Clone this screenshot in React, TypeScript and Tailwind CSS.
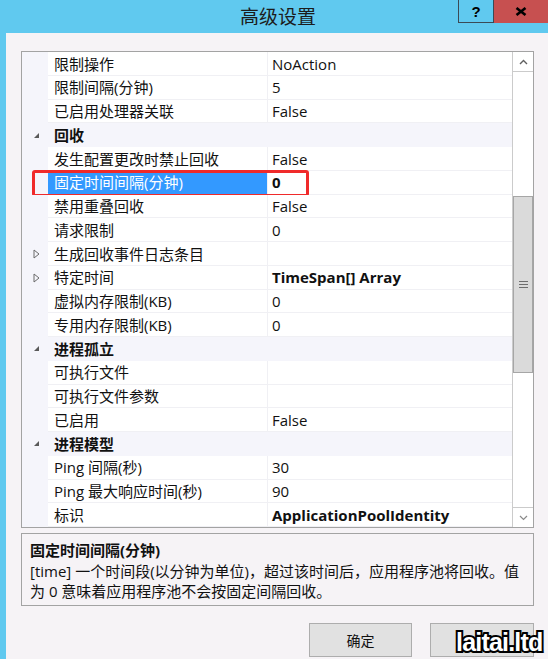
import React from "react";

type Row = {
  kind: "cat" | "item";
  name: string;
  value?: string;
  bold?: boolean;
  exp?: "open" | "closed";
  sel?: boolean;
};

const rows: Row[] = [
  { kind: "item", name: "限制操作", value: "NoAction" },
  { kind: "item", name: "限制间隔(分钟)", value: "5" },
  { kind: "item", name: "已启用处理器关联", value: "False" },
  { kind: "cat", name: "回收", exp: "open" },
  { kind: "item", name: "发生配置更改时禁止回收", value: "False" },
  { kind: "item", name: "固定时间间隔(分钟)", value: "0", bold: true, sel: true },
  { kind: "item", name: "禁用重叠回收", value: "False" },
  { kind: "item", name: "请求限制", value: "0" },
  { kind: "item", name: "生成回收事件日志条目", value: "", exp: "closed" },
  { kind: "item", name: "特定时间", value: "TimeSpan[] Array", bold: true, exp: "closed" },
  { kind: "item", name: "虚拟内存限制(KB)", value: "0" },
  { kind: "item", name: "专用内存限制(KB)", value: "0" },
  { kind: "cat", name: "进程孤立", exp: "open" },
  { kind: "item", name: "可执行文件", value: "" },
  { kind: "item", name: "可执行文件参数", value: "" },
  { kind: "item", name: "已启用", value: "False" },
  { kind: "cat", name: "进程模型", exp: "open" },
  { kind: "item", name: "Ping 间隔(秒)", value: "30" },
  { kind: "item", name: "Ping 最大响应时间(秒)", value: "90" },
  { kind: "item", name: "标识", value: "ApplicationPoolIdentity", bold: true },
];

function Expander({ exp }: { exp?: "open" | "closed" }) {
  if (exp === "open")
    return (
      <svg width="7" height="7" viewBox="0 0 7 7" className="block">
        <polygon points="6,1 6,6 1,6" fill="#5a5a5a" />
      </svg>
    );
  if (exp === "closed")
    return (
      <svg width="7" height="10" viewBox="0 0 7 10" className="block">
        <polygon points="1,1 6,5 1,9" fill="none" stroke="#6a6a6a" strokeWidth="1" />
      </svg>
    );
  return null;
}

function GridRow({ r }: { r: Row }) {
  return (
    <div className="relative flex h-[23.75px] shrink-0">
      <div className="flex w-[26px] shrink-0 items-center bg-[#f5f5fb] pl-[11px]">
        <Expander exp={r.exp} />
      </div>
      {r.kind === "cat" ? (
        <div className="flex flex-1 items-center bg-[#f5f5fb] pl-[6px] pt-[1px] font-bold text-[#111]">
          {r.name}
        </div>
      ) : (
        <>
          <div
            className={
              r.sel
                ? "flex w-[219px] shrink-0 items-center border-b border-[#f0f0f4] bg-[#3399ff] pl-[6px] pt-[1px] whitespace-nowrap text-white"
                : "flex w-[219px] shrink-0 items-center border-b border-[#f0f0f4] bg-white pl-[6px] pt-[1px] whitespace-nowrap text-[#111]"
            }
          >
            {r.name}
          </div>
          <div
            className={
              r.bold
                ? "flex flex-1 items-center border-b border-l border-[#f0f0f4] bg-white pl-[4px] pt-[1px] font-bold whitespace-nowrap text-[#111]"
                : "flex flex-1 items-center border-b border-l border-[#f0f0f4] bg-white pl-[4px] pt-[1px] whitespace-nowrap text-[#111]"
            }
          >
            {r.value}
          </div>
        </>
      )}
      {r.sel && (
        <div className="pointer-events-none absolute left-[10px] top-[-1px] h-[27px] w-[277px] rounded-[3px] border-[3px] border-[#f02a2a]" />
      )}
    </div>
  );
}

export default function App() {
  return (
    <div className="relative flex h-[659px] w-[548px] flex-col overflow-hidden bg-[#60c9ef] font-['Open_Sans','Noto_Sans_CJK_SC',sans-serif] text-[15px]">
      {/* title bar */}
      <div className="relative flex h-[33px] shrink-0 items-center justify-center pl-[8px]">
        <span className="font-['Noto_Sans_CJK_SC',sans-serif] text-[19px] text-[#1c1c1c]">高级设置</span>
        <div className="absolute right-0 top-0 flex h-[23px]">
          <div className="flex w-[36px] items-center justify-center border-b border-l border-r border-[#3b4a55] bg-[#60c9ef]">
            <span className="font-['Liberation_Sans',sans-serif] text-[15px] font-bold leading-none text-black">?</span>
          </div>
          <div className="flex w-[54px] items-center justify-center bg-[#c75050]">
            <svg width="12" height="9" viewBox="0 0 12 9">
              <line x1="1.5" y1="1" x2="10.5" y2="8" stroke="#000" strokeWidth="2.6" />
              <line x1="10.5" y1="1" x2="1.5" y2="8" stroke="#000" strokeWidth="2.6" />
            </svg>
          </div>
        </div>
      </div>

      {/* client area */}
      <div className="ml-[6px] flex flex-1 flex-col bg-[#f6f3f6] pl-[15px] pr-[14px] pt-[18px]">
        {/* property grid */}
        <div className="flex h-[477px] shrink-0 border border-[#a3a3a3] bg-white">
          <div className="flex flex-1 flex-col">
            {rows.map((r, i) => (
              <GridRow key={i} r={r} />
            ))}
          </div>
          <div className="flex w-[21px] shrink-0 flex-col border-l border-[#cbcbcb] bg-white">
            <div className="flex h-[20px] shrink-0 items-center justify-center border-b border-[#cbcbcb]">
              <svg width="9" height="6" viewBox="0 0 9 6">
                <polyline points="1,5 4.5,1.5 8,5" fill="none" stroke="#606060" strokeWidth="1.4" />
              </svg>
            </div>
            <div className="flex-1">
              <div className="mt-[124px] flex h-[177px] items-center justify-center border border-[#a6a6a6] bg-[#dadada]">
                <div className="flex flex-col gap-[1.5px]">
                  <div className="h-[1.5px] w-[9px] bg-[#6e6e6e]" />
                  <div className="h-[1.5px] w-[9px] bg-[#6e6e6e]" />
                  <div className="h-[1.5px] w-[9px] bg-[#6e6e6e]" />
                </div>
              </div>
            </div>
            <div className="flex h-[20px] shrink-0 items-center justify-center border-t border-[#cbcbcb]">
              <svg width="9" height="6" viewBox="0 0 9 6">
                <polyline points="1,1 4.5,4.5 8,1" fill="none" stroke="#8a8a8a" strokeWidth="1.2" />
              </svg>
            </div>
          </div>
        </div>

        {/* description */}
        <div className="mt-[5px] h-[73px] shrink-0 border border-[#a3a3a3] pl-[8px] pt-[6px] leading-[20.5px] text-[#111]">
          <div className="font-bold whitespace-nowrap">固定时间间隔(分钟)</div>
          <div className="whitespace-nowrap">[time] 一个时间段(以分钟为单位)，超过该时间后，应用程序池将回收。值</div>
          <div className="whitespace-nowrap">为 0 意味着应用程序池不会按固定间隔回收。</div>
        </div>

        {/* buttons */}
        <div className="mt-[17px] flex justify-end gap-[18px]">
          <div className="flex h-[34px] w-[103px] items-center justify-center border border-[#adadad] bg-[#e1e1e1] text-[14px] text-[#111]">
            确定
          </div>
          <div className="h-[34px] w-[104px] border border-[#adadad] bg-[#e1e1e1]" />
        </div>
      </div>

      {/* watermark */}
      <div className="absolute left-[456px] top-[624px] font-['Liberation_Sans',sans-serif] text-[25px] font-bold tracking-[-0.8px] text-white [-webkit-text-stroke:4px_#000] [paint-order:stroke_fill]">
        laitai.ltd
      </div>
    </div>
  );
}
